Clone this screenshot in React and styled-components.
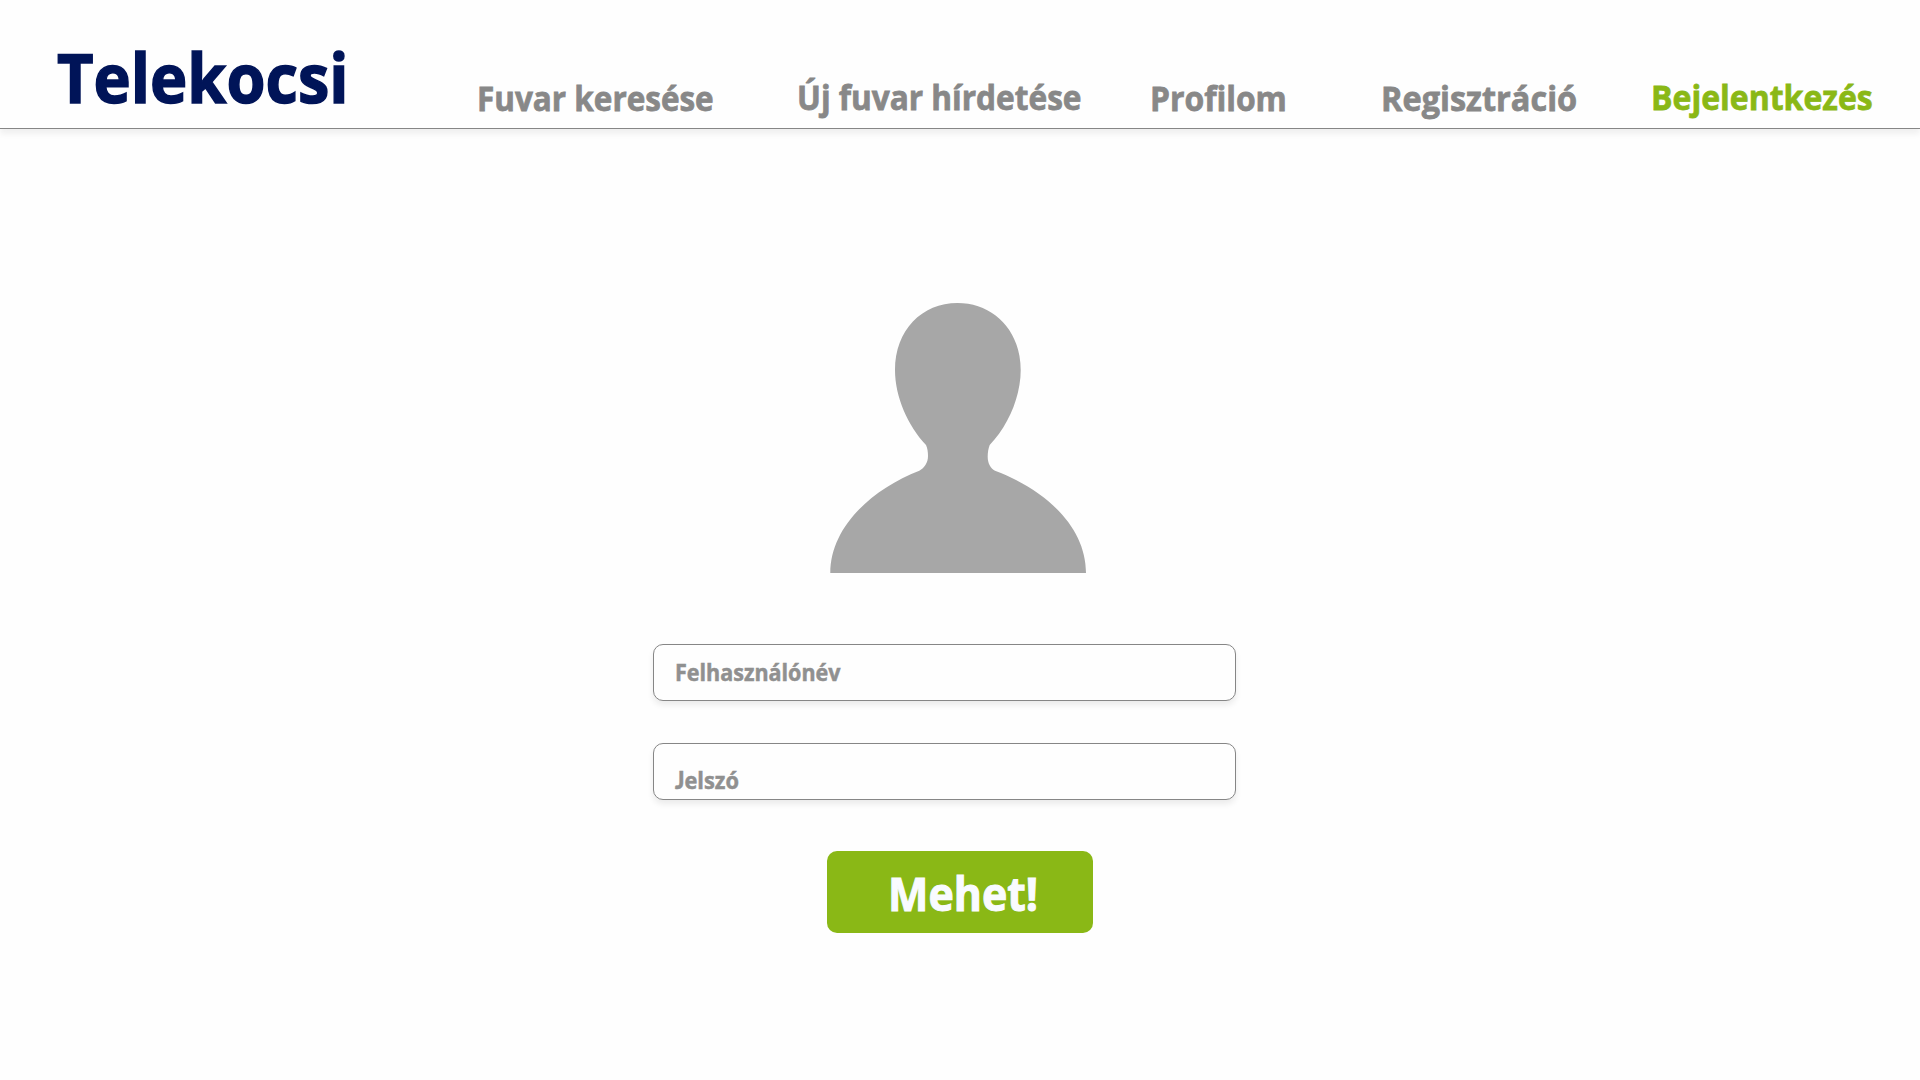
import React from "react";
import styled, { createGlobalStyle } from "styled-components";

const GlobalStyle = createGlobalStyle`
  body {
    margin: 0;
    background: #fefefe;
    font-family: "Open Sans", "Noto Sans", sans-serif;
    font-weight: 700;
  }
`;

const Page = styled.div`
  width: 1920px;
  height: 1080px;
  overflow: hidden;
  background: #fefefe;
`;

/* Slightly condensed, heavier lettering; $fit is the horizontal ratio */
const Text = styled.span`
  display: inline-block;
  white-space: nowrap;
  transform: scaleX(${(p) => p.$fit});
  transform-origin: left center;
  -webkit-text-stroke: 0.022em currentColor;
`;

const Header = styled.header`
  box-sizing: border-box;
  height: 129px;
  padding-left: 57px;
  display: grid;
  grid-template-columns: 419.6px 1fr;
  border-bottom: 1px solid #868686;
  box-shadow: 0 5px 6px rgba(0, 0, 0, 0.06);
`;

const Logo = styled.h1`
  margin: 0;
  padding-top: 37px;
  font-size: 68.2px;
  line-height: 80px;
  color: #001458;
`;

const Nav = styled.nav`
  display: grid;
  grid-template-columns: 320.5px 353.2px 231px 270px 1fr;
`;

const NavLink = styled.a`
  padding-top: ${(p) => (p.$raised ? 76.5 : 77.5)}px;
  font-size: 34.8px;
  line-height: 40px;
  color: ${(p) => (p.$active ? "#8ab816" : "#888888")};
`;

const Login = styled.main`
  display: flex;
  flex-direction: column;
  align-items: flex-start;
`;

const Avatar = styled.svg`
  display: block;
  width: 256px;
  height: 270px;
  margin: 174px 0 0 830px;
  fill: #a7a7a7;
`;

const Form = styled.div`
  display: flex;
  flex-direction: column;
  margin: 71px 0 0 653px;
  gap: 42px;
`;

const Field = styled.div`
  box-sizing: border-box;
  width: 583px;
  height: 57px;
  padding: ${(p) => p.$top}px 0 0 ${(p) => p.$left}px;
  border: 1px solid #868686;
  border-radius: 10px;
  background: #fefefe;
  box-shadow: 0 4px 6px rgba(0, 0, 0, 0.08);
  font-size: 23.7px;
  line-height: 30px;
  color: #909090;
`;

const Initial = styled.span`
  font-family: Lato, sans-serif;
  font-weight: 900;
`;

const Submit = styled.button`
  box-sizing: border-box;
  width: 266px;
  height: 82px;
  margin: 51px 0 0 827px;
  padding: 12px 0 0 60.5px;
  display: flex;
  align-items: flex-start;
  border: 0;
  border-radius: 10px;
  background: #8ab816;
  font: inherit;
  font-size: 45.9px;
  line-height: 60px;
  color: #f9fbff;
`;

const links = [
  { label: "Fuvar keresése", fit: 0.904 },
  { label: "Új fuvar hírdetése", fit: 0.908, raised: true },
  { label: "Profilom", fit: 0.915 },
  { label: "Regisztráció", fit: 0.934 },
  { label: "Bejelentkezés", fit: 0.919, raised: true, active: true },
];

export default function App() {
  return (
    <Page>
      <GlobalStyle />
      <Header>
        <Logo>
          <Text $fit={0.925}>Telekocsi</Text>
        </Logo>
        <Nav>
          {links.map((l) => (
            <NavLink key={l.label} $raised={l.raised} $active={l.active}>
              <Text $fit={l.fit}>{l.label}</Text>
            </NavLink>
          ))}
        </Nav>
      </Header>
      <Login>
        <Avatar viewBox="0 0 256 270">
          <path d="M127.500 0C163 0 190.700 27 190.700 67C190.700 94 178 123 159.700 142C158.500 145 157.700 149 157.700 154C157.700 160 160.500 165.500 165 167.700C216 187 256 224 256 270H0.300C0.300 224 42 186 89.300 167.700C94.500 165 98 159.500 98 153C98 149 97.500 145 96 142C78 123 65 94 65 67C65 27 92 0 127.500 0Z" />
        </Avatar>
        <Form>
          <Field $top={12} $left={21}>
            <Text $fit={0.908}>Felhasználónév</Text>
          </Field>
          <Field $top={21} $left={21}>
            <Text $fit={0.92}>
              <Initial>J</Initial>elszó
            </Text>
          </Field>
        </Form>
        <Submit>
          <Text $fit={0.934}>Mehet!</Text>
        </Submit>
      </Login>
    </Page>
  );
}
